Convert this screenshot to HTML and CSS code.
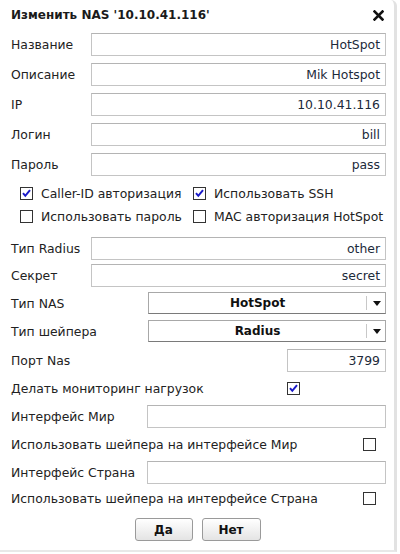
FILE: index.html
```html
<!DOCTYPE html>
<html>
<head>
<meta charset="utf-8">
<link rel="stylesheet" href="styles.css">
</head>
<body>
<div class="dialog">
  <div class="title">
    <span class="title-text">Изменить NAS '10.10.41.116'</span>
    <svg class="close" width="11" height="11" viewBox="0 0 11 11"><path d="M1.5 1.5 L9.5 9.5 M9.5 1.5 L1.5 9.5" stroke="#111" stroke-width="2.6" stroke-linecap="square"/></svg>
  </div>

  <div class="row r1"><span class="label lw80">Название</span><span class="input grow">HotSpot</span></div>
  <div class="row r-gap7"><span class="label lw80">Описание</span><span class="input grow">Mik Hotspot</span></div>
  <div class="row r-gap7"><span class="label lw80">IP</span><span class="input grow">10.10.41.116</span></div>
  <div class="row r-gap7"><span class="label lw80">Логин</span><span class="input grow">bill</span></div>
  <div class="row r-gap7"><span class="label lw80">Пароль</span><span class="input grow">pass</span></div>

  <div class="cbrow cb-first">
    <span class="cbgroup"><span class="cb checked"><svg width="13" height="13" viewBox="0 0 13 13"><rect x="0.5" y="0.5" width="12" height="12" fill="#fff" stroke="#333"/><path d="M3 6.2 L5.3 8.8 L10 3.2" fill="none" stroke="#1a1ac8" stroke-width="2"/></svg></span><span class="cbtext">Caller-ID авторизация</span></span>
    <span class="cbgroup"><span class="cb checked"><svg width="13" height="13" viewBox="0 0 13 13"><rect x="0.5" y="0.5" width="12" height="12" fill="#fff" stroke="#333"/><path d="M3 6.2 L5.3 8.8 L10 3.2" fill="none" stroke="#1a1ac8" stroke-width="2"/></svg></span><span class="cbtext">Использовать SSH</span></span>
  </div>
  <div class="cbrow">
    <span class="cbgroup"><span class="cb"><svg width="13" height="13" viewBox="0 0 13 13"><rect x="0.5" y="0.5" width="12" height="12" fill="#fff" stroke="#333"/></svg></span><span class="cbtext">Использовать пароль</span></span>
    <span class="cbgroup"><span class="cb"><svg width="13" height="13" viewBox="0 0 13 13"><rect x="0.5" y="0.5" width="12" height="12" fill="#fff" stroke="#333"/></svg></span><span class="cbtext">MAC авторизация HotSpot</span></span>
  </div>

  <div class="row r-radius"><span class="label lw80">Тип Radius</span><span class="input grow">other</span></div>
  <div class="row r-secret"><span class="label lw80">Секрет</span><span class="input grow">secret</span></div>

  <div class="row short r-nas"><span class="label lw137">Тип NAS</span>
    <span class="select grow"><span class="select-val">HotSpot</span><span class="select-btn"><svg width="8" height="5" viewBox="0 0 8 5"><path d="M0 0 L8 0 L4 5 Z" fill="#111"/></svg></span></span></div>
  <div class="row short r-shaper"><span class="label lw137">Тип шейпера</span>
    <span class="select grow"><span class="select-val">Radius</span><span class="select-btn"><svg width="8" height="5" viewBox="0 0 8 5"><path d="M0 0 L8 0 L4 5 Z" fill="#111"/></svg></span></span></div>

  <div class="row r-port"><span class="label lw276">Порт Nas</span><span class="input grow">3799</span></div>

  <div class="row short r-mon"><span class="label lw276">Делать мониторинг нагрузок</span>
    <span class="cb"><svg width="13" height="13" viewBox="0 0 13 13"><rect x="0.5" y="0.5" width="12" height="12" fill="#fff" stroke="#333"/><path d="M3 6.2 L5.3 8.8 L10 3.2" fill="none" stroke="#1a1ac8" stroke-width="2"/></svg></span></div>

  <div class="row r-mir"><span class="label lw136">Интерфейс Мир</span><span class="input grow"></span></div>
  <div class="row short r-mircb"><span class="label lw352">Использовать шейпера на интерфейсе Мир</span>
    <span class="cb"><svg width="13" height="13" viewBox="0 0 13 13"><rect x="0.5" y="0.5" width="12" height="12" fill="#fff" stroke="#333"/></svg></span></div>

  <div class="row r-str"><span class="label lw136">Интерфейс Страна</span><span class="input grow"></span></div>
  <div class="row short r-strcb"><span class="label lw352">Использовать шейпера на интерфейсе Страна</span>
    <span class="cb"><svg width="13" height="13" viewBox="0 0 13 13"><rect x="0.5" y="0.5" width="12" height="12" fill="#fff" stroke="#333"/></svg></span></div>

  <div class="buttons">
    <button class="btn btn-yes">Да</button>
    <button class="btn btn-no">Нет</button>
  </div>
</div>
</body>
</html>
```

FILE: styles.css
```css
html, body {
  margin: 0;
  padding: 0;
  background: #fff;
}
body {
  font-family: "DejaVu Sans", Verdana, sans-serif;
  font-size: 12.4px;
  color: #222;
}
.dialog {
  width: 397px;
  height: 552px;
  box-sizing: border-box;
  background: #fff;
  border-right: 3px solid #e2e2e2;
  border-bottom: 2px solid #e8e8e8;
  border-top-right-radius: 6px;
  padding: 0 8px 0 11px;
  display: flex;
  flex-direction: column;
}
.title {
  height: 30px;
  display: flex;
  align-items: center;
  justify-content: space-between;
  padding-right: 2px;
}
.title-text {
  font-weight: bold;
  font-size: 12px;
  color: #1a1a1a;
}
.close {
  display: block;
}
.row {
  display: flex;
  align-items: center;
  height: 23px;
  flex-shrink: 0;
}
.row.short { height: 22px; }
.r1 { margin-top: 3px; }
.r-gap7 { margin-top: 7px; }
.r-radius { margin-top: 10px; }
.r-secret { margin-top: 4px; }
.r-nas { margin-top: 5px; }
.r-shaper { margin-top: 6px; }
.r-port { margin-top: 7px; }
.r-mon { margin-top: 5px; }
.r-mir { margin-top: 6px; }
.r-mircb { margin-top: 5px; }
.r-str { margin-top: 6px; }
.r-strcb { margin-top: 3px; }

.label { flex-shrink: 0; white-space: nowrap; }
.lw80 { width: 80px; }
.lw136 { width: 136px; }
.lw137 { width: 137px; }
.lw276 { width: 276px; }
.lw352 { width: 352px; }
.grow { flex: 1; }

.input {
  height: 23px;
  box-sizing: border-box;
  border: 1px solid #c4c4c4;
  border-top-color: #b4b4b4;
  background: #fff;
  text-align: right;
  padding: 0 5px;
  line-height: 21px;
  color: #1c2a3a;
}
.select {
  height: 22px;
  box-sizing: border-box;
  border: 1px solid #a8a8a8;
  border-bottom-color: #7a7a7a;
  background: #fff;
  display: flex;
  align-items: center;
}
.select-val {
  flex: 1;
  text-align: center;
  font-weight: bold;
  font-size: 12px;
  color: #111;
}
.select-btn {
  width: 18px;
  height: 14px;
  border-left: 1px solid #c8c8c8;
  display: flex;
  align-items: center;
  justify-content: center;
}
.select-btn svg { display: block; margin-left: 1px; }

.cbrow {
  display: flex;
  align-items: center;
  height: 22px;
  padding-left: 9px;
  flex-shrink: 0;
}
.cb-first { margin-top: 6px; }
.cbrow + .cbrow { margin-top: 1px; }
.cbgroup {
  display: flex;
  align-items: center;
  width: 173px;
}
.cb {
  display: block;
  width: 13px;
  height: 13px;
  flex-shrink: 0;
}
.cb svg { display: block; }
.cbtext { margin-left: 8px; white-space: nowrap; }

.buttons {
  display: flex;
  justify-content: center;
  gap: 9px;
  margin-top: 9px;
  padding-right: 2px;
}
.btn {
  height: 23px;
  box-sizing: border-box;
  border: 1px solid #9a9a9a;
  border-radius: 3px;
  background: linear-gradient(#ffffff, #e4e4e4);
  font-family: "DejaVu Sans", Verdana, sans-serif;
  font-size: 12px;
  font-weight: bold;
  color: #111;
  padding: 0;
}
.btn-yes { width: 58px; }
.btn-no { width: 59px; }
```
